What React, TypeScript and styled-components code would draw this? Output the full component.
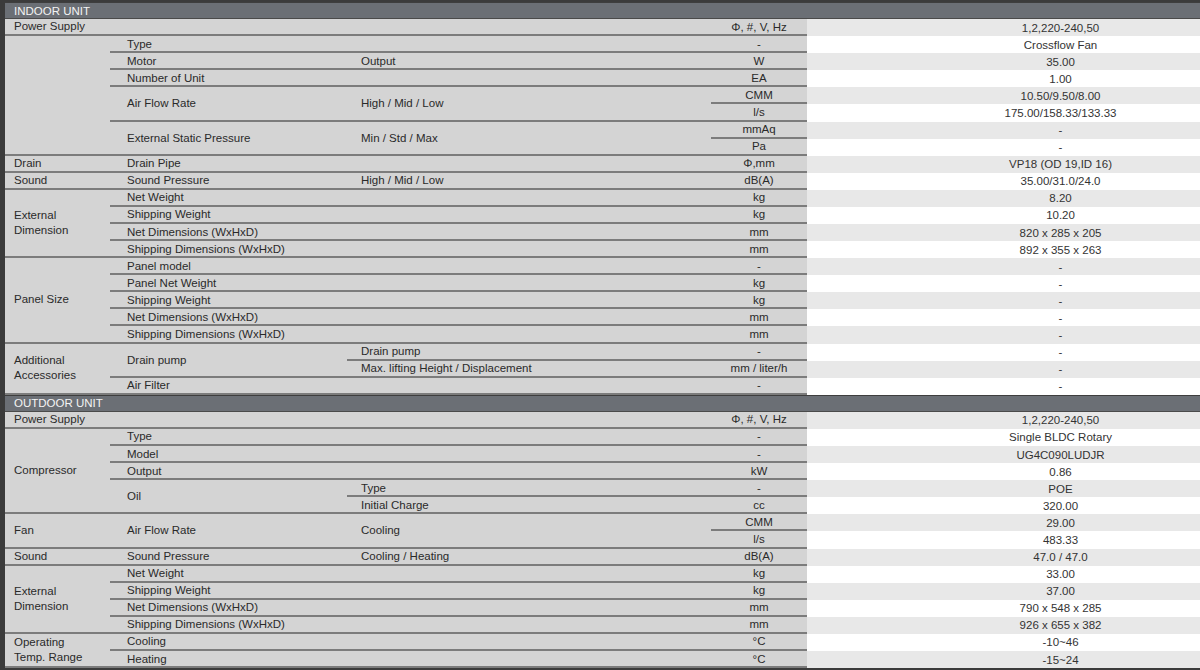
import React from "react";
import styled, { createGlobalStyle } from "styled-components";

const Global = createGlobalStyle`
  html, body { margin: 0; padding: 0; background: #3b3b3b; }
  body { font-family: "Liberation Sans", Arial, Helvetica, sans-serif; }
`;

const Page = styled.div`
  width: 1200px;
  height: 670px;
  box-sizing: border-box;
  padding: 2px 0 0 5px;
  background: #3b3b3b;
  overflow: hidden;
`;

const Table = styled.table`
  width: 1195px;
  table-layout: fixed;
  border-collapse: separate;
  border-spacing: 0;
  font-size: 11.5px;
  color: #2a2a2a;
  background: #d4d4d4;
`;

const Row = styled.tr`
  height: 17.08px;
`;

const base = `
  padding: 0;
  line-height: 14px;
  vertical-align: middle;
  white-space: nowrap;
  overflow: hidden;
  box-sizing: border-box;
`;

const Header = styled.td`
  ${base}
  background: #6b6f75;
  color: #f3f3f3;
  padding-left: 9px;
  border-top: 1px solid #3e3e3e;
  border-bottom: 1px solid #4a4a4a;
`;

const Cat = styled.td`
  ${base}
  padding-left: 9px;
  line-height: 15px;
  white-space: normal;
  border-bottom: 2px solid #7c7c7c;
`;

const Item = styled.td`
  ${base}
  padding-left: 17px;
  border-bottom: 2px solid #7c7c7c;
`;

const Sub = styled.td`
  ${base}
  padding-left: 14px;
  border-bottom: 2px solid #7c7c7c;
`;

const Unit = styled.td`
  ${base}
  text-align: center;
  border-bottom: 2px solid #7c7c7c;
`;

const Val = styled.td<{ $alt: boolean }>`
  ${base}
  text-align: center;
  padding-left: 114px;
  color: #333;
  background: ${(p) => (p.$alt ? "#ffffff" : "#e8e8e8")};
`;

const V = ({ i, children }: { i: number; children: React.ReactNode }) => (
  <Val $alt={i % 2 === 1}>{children}</Val>
);

export default function App() {
  return (
    <Page>
      <Global />
      <Table>
        <colgroup>
          <col style={{ width: 105 }} />
          <col style={{ width: 237 }} />
          <col style={{ width: 364 }} />
          <col style={{ width: 96 }} />
          <col style={{ width: 393 }} />
        </colgroup>
        <tbody>
          <Row>
            <Header colSpan={5}>INDOOR UNIT</Header>
          </Row>
          <Row>
            <Cat colSpan={3}>Power Supply</Cat>
            <Unit>Φ, #, V, Hz</Unit>
            <V i={0}>1,2,220-240,50</V>
          </Row>
          <Row>
            <Cat rowSpan={7}></Cat>
            <Item colSpan={2}>Type</Item>
            <Unit>-</Unit>
            <V i={1}>Crossflow Fan</V>
          </Row>
          <Row>
            <Item>Motor</Item>
            <Sub>Output</Sub>
            <Unit>W</Unit>
            <V i={2}>35.00</V>
          </Row>
          <Row>
            <Item colSpan={2}>Number of Unit</Item>
            <Unit>EA</Unit>
            <V i={3}>1.00</V>
          </Row>
          <Row>
            <Item rowSpan={2}>Air Flow Rate</Item>
            <Sub rowSpan={2}>High / Mid / Low</Sub>
            <Unit>CMM</Unit>
            <V i={4}>10.50/9.50/8.00</V>
          </Row>
          <Row>
            <Unit>l/s</Unit>
            <V i={5}>175.00/158.33/133.33</V>
          </Row>
          <Row>
            <Item rowSpan={2}>External Static Pressure</Item>
            <Sub rowSpan={2}>Min / Std / Max</Sub>
            <Unit>mmAq</Unit>
            <V i={6}>-</V>
          </Row>
          <Row>
            <Unit>Pa</Unit>
            <V i={7}>-</V>
          </Row>
          <Row>
            <Cat>Drain</Cat>
            <Item colSpan={2}>Drain Pipe</Item>
            <Unit>Φ,mm</Unit>
            <V i={8}>VP18 (OD 19,ID 16)</V>
          </Row>
          <Row>
            <Cat>Sound</Cat>
            <Item>Sound Pressure</Item>
            <Sub>High / Mid / Low</Sub>
            <Unit>dB(A)</Unit>
            <V i={9}>35.00/31.0/24.0</V>
          </Row>
          <Row>
            <Cat rowSpan={4}>
              External
              <br />
              Dimension
            </Cat>
            <Item colSpan={2}>Net Weight</Item>
            <Unit>kg</Unit>
            <V i={10}>8.20</V>
          </Row>
          <Row>
            <Item colSpan={2}>Shipping Weight</Item>
            <Unit>kg</Unit>
            <V i={11}>10.20</V>
          </Row>
          <Row>
            <Item colSpan={2}>Net Dimensions (WxHxD)</Item>
            <Unit>mm</Unit>
            <V i={12}>820 x 285 x 205</V>
          </Row>
          <Row>
            <Item colSpan={2}>Shipping Dimensions (WxHxD)</Item>
            <Unit>mm</Unit>
            <V i={13}>892 x 355 x 263</V>
          </Row>
          <Row>
            <Cat rowSpan={5}>Panel Size</Cat>
            <Item colSpan={2}>Panel model</Item>
            <Unit>-</Unit>
            <V i={14}>-</V>
          </Row>
          <Row>
            <Item colSpan={2}>Panel Net Weight</Item>
            <Unit>kg</Unit>
            <V i={15}>-</V>
          </Row>
          <Row>
            <Item colSpan={2}>Shipping Weight</Item>
            <Unit>kg</Unit>
            <V i={16}>-</V>
          </Row>
          <Row>
            <Item colSpan={2}>Net Dimensions (WxHxD)</Item>
            <Unit>mm</Unit>
            <V i={17}>-</V>
          </Row>
          <Row>
            <Item colSpan={2}>Shipping Dimensions (WxHxD)</Item>
            <Unit>mm</Unit>
            <V i={18}>-</V>
          </Row>
          <Row>
            <Cat rowSpan={3}>
              Additional
              <br />
              Accessories
            </Cat>
            <Item rowSpan={2}>Drain pump</Item>
            <Sub>Drain pump</Sub>
            <Unit>-</Unit>
            <V i={19}>-</V>
          </Row>
          <Row>
            <Sub>Max. lifting Height / Displacement</Sub>
            <Unit>mm / liter/h</Unit>
            <V i={20}>-</V>
          </Row>
          <Row>
            <Item colSpan={2}>Air Filter</Item>
            <Unit>-</Unit>
            <V i={21}>-</V>
          </Row>

          <Row>
            <Header colSpan={5}>OUTDOOR UNIT</Header>
          </Row>
          <Row>
            <Cat colSpan={3}>Power Supply</Cat>
            <Unit>Φ, #, V, Hz</Unit>
            <V i={0}>1,2,220-240,50</V>
          </Row>
          <Row>
            <Cat rowSpan={5}>Compressor</Cat>
            <Item colSpan={2}>Type</Item>
            <Unit>-</Unit>
            <V i={1}>Single BLDC Rotary</V>
          </Row>
          <Row>
            <Item colSpan={2}>Model</Item>
            <Unit>-</Unit>
            <V i={2}>UG4C090LUDJR</V>
          </Row>
          <Row>
            <Item colSpan={2}>Output</Item>
            <Unit>kW</Unit>
            <V i={3}>0.86</V>
          </Row>
          <Row>
            <Item rowSpan={2}>Oil</Item>
            <Sub>Type</Sub>
            <Unit>-</Unit>
            <V i={4}>POE</V>
          </Row>
          <Row>
            <Sub>Initial Charge</Sub>
            <Unit>cc</Unit>
            <V i={5}>320.00</V>
          </Row>
          <Row>
            <Cat rowSpan={2}>Fan</Cat>
            <Item rowSpan={2}>Air Flow Rate</Item>
            <Sub rowSpan={2}>Cooling</Sub>
            <Unit>CMM</Unit>
            <V i={6}>29.00</V>
          </Row>
          <Row>
            <Unit>l/s</Unit>
            <V i={7}>483.33</V>
          </Row>
          <Row>
            <Cat>Sound</Cat>
            <Item>Sound Pressure</Item>
            <Sub>Cooling / Heating</Sub>
            <Unit>dB(A)</Unit>
            <V i={8}>47.0 / 47.0</V>
          </Row>
          <Row>
            <Cat rowSpan={4}>
              External
              <br />
              Dimension
            </Cat>
            <Item colSpan={2}>Net Weight</Item>
            <Unit>kg</Unit>
            <V i={9}>33.00</V>
          </Row>
          <Row>
            <Item colSpan={2}>Shipping Weight</Item>
            <Unit>kg</Unit>
            <V i={10}>37.00</V>
          </Row>
          <Row>
            <Item colSpan={2}>Net Dimensions (WxHxD)</Item>
            <Unit>mm</Unit>
            <V i={11}>790 x 548 x 285</V>
          </Row>
          <Row>
            <Item colSpan={2}>Shipping Dimensions (WxHxD)</Item>
            <Unit>mm</Unit>
            <V i={12}>926 x 655 x 382</V>
          </Row>
          <Row>
            <Cat rowSpan={2}>
              Operating
              <br />
              Temp. Range
            </Cat>
            <Item colSpan={2}>Cooling</Item>
            <Unit>°C</Unit>
            <V i={13}>-10~46</V>
          </Row>
          <Row>
            <Item colSpan={2}>Heating</Item>
            <Unit>°C</Unit>
            <V i={14}>-15~24</V>
          </Row>
        </tbody>
      </Table>
    </Page>
  );
}
